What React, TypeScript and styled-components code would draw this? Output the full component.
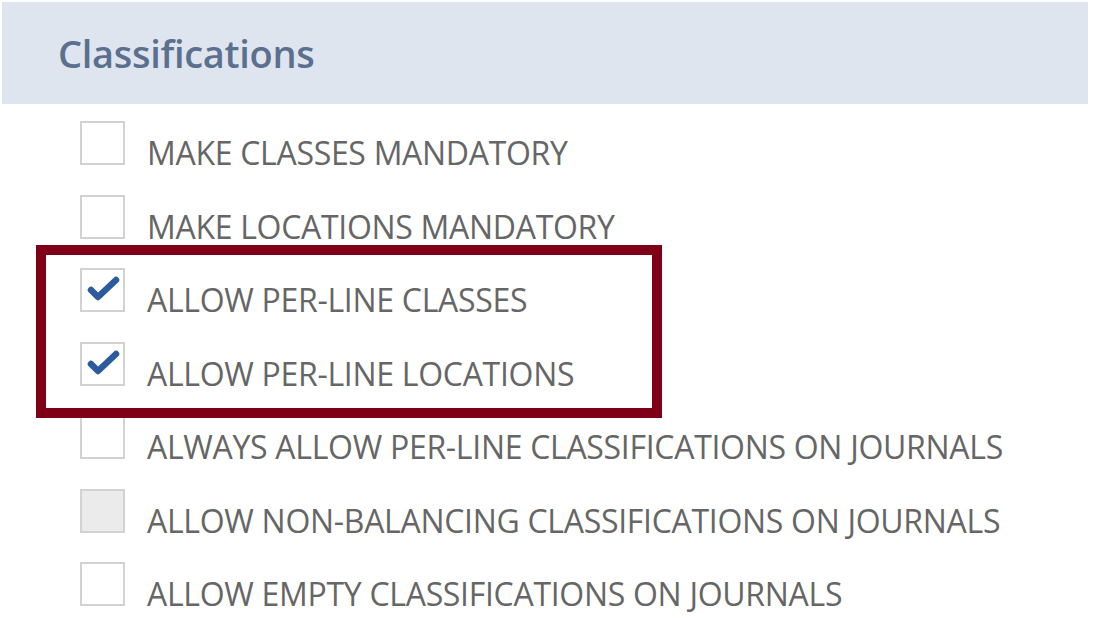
import styled, { createGlobalStyle } from "styled-components";

const GlobalStyle = createGlobalStyle`
  html, body {
    margin: 0;
    padding: 0;
    background: #ffffff;
  }
  body {
    font-family: "Open Sans", "Liberation Sans", sans-serif;
  }
`;

const Page = styled.div`
  position: relative;
  width: 1094px;
  height: 618px;
  overflow: hidden;
  background: #ffffff;
`;

const Header = styled.div`
  margin: 2px 6px 0 2px;
  height: 102px;
  background: #dfe5ef;
  display: flex;
  align-items: center;
  padding-left: 56px;
`;

const Title = styled.h2`
  margin: 0;
  font-size: 38px;
  font-weight: 600;
  color: #5b6f8e;
  letter-spacing: -0.3px;
`;

const List = styled.ul`
  list-style: none;
  margin: 17px 0 0;
  padding: 0 0 0 80px;
`;

const Row = styled.li`
  display: flex;
  align-items: flex-start;
  height: 73.5px;
`;

const Box = styled.span<{ $disabled?: boolean }>`
  flex: none;
  width: 45px;
  height: 44px;
  box-sizing: border-box;
  border: 2px solid #d2d2d2;
  background: ${(p) => (p.$disabled ? "#ebebeb" : "#ffffff")};
  display: flex;
  align-items: center;
  justify-content: center;
`;

const Label = styled.span`
  margin: 9px 0 0 22px;
  font-size: 32px;
  line-height: 45px;
  letter-spacing: -0.3px;
  color: #666666;
  white-space: nowrap;
`;

// 注釈の赤い枠（内容の上に重ねる）
const Highlight = styled.div`
  position: absolute;
  left: 36px;
  top: 245px;
  width: 626px;
  height: 173px;
  box-sizing: border-box;
  border: 10px solid #7f0016;
  pointer-events: none;
`;

const Check = () => (
  <svg width="41" height="40" viewBox="0 0 41 40">
    <path
      d="M9 20 L16 27 L34 10"
      fill="none"
      stroke="#2b5a9e"
      strokeWidth="6.5"
      strokeLinecap="round"
      strokeLinejoin="round"
    />
  </svg>
);

const items = [
  { label: "MAKE CLASSES MANDATORY" },
  { label: "MAKE LOCATIONS MANDATORY" },
  { label: "ALLOW PER-LINE CLASSES", checked: true },
  { label: "ALLOW PER-LINE LOCATIONS", checked: true },
  { label: "ALWAYS ALLOW PER-LINE CLASSIFICATIONS ON JOURNALS" },
  { label: "ALLOW NON-BALANCING CLASSIFICATIONS ON JOURNALS", disabled: true },
  { label: "ALLOW EMPTY CLASSIFICATIONS ON JOURNALS" },
];

export default function App() {
  return (
    <Page>
      <GlobalStyle />
      <Header>
        <Title>Classifications</Title>
      </Header>
      <List>
        {items.map((item) => (
          <Row key={item.label}>
            <Box $disabled={item.disabled}>{item.checked && <Check />}</Box>
            <Label>{item.label}</Label>
          </Row>
        ))}
      </List>
      <Highlight />
    </Page>
  );
}
